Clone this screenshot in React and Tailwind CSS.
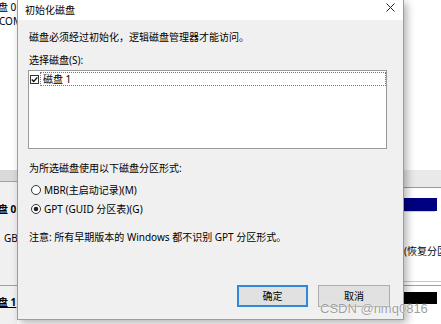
import React from 'react';

const font = { fontFamily: '"Noto Sans", "Noto Sans CJK SC", sans-serif' };

function CheckBox() {
  return (
    <svg width="9" height="9" viewBox="0 0 9 9" className="shrink-0">
      <rect x="0.5" y="0.5" width="8" height="8" fill="#fff" stroke="#333" />
      <path d="M1.8 4.6 L3.7 6.5 L7.3 2.4" fill="none" stroke="#111" strokeWidth="1.4" />
    </svg>
  );
}

function Radio({ checked }) {
  return (
    <svg width="10" height="10" viewBox="0 0 10 10" className="shrink-0">
      <circle cx="5" cy="5" r="4.5" fill="#fff" stroke="#333" />
      {checked && <circle cx="5" cy="5" r="2.3" fill="#222" />}
    </svg>
  );
}

export default function App() {
  return (
    <div
      className="relative w-[441px] h-[324px] overflow-hidden bg-white text-[10px] leading-[12px] text-black"
      style={font}
    >
      {/* Background window (Disk Management) */}
      <div className="flex h-full">
        {/* left strip */}
        <div className="w-[17px] flex flex-col overflow-hidden shrink-0">
          <div className="h-[170px] bg-white pt-[1px]">
            <div className="ml-[-12px] whitespace-nowrap">磁盘 0</div>
            <div className="ml-[-1px] mt-[2px] whitespace-nowrap">COM</div>
          </div>
          <div className="h-[11px] bg-[#dadada]" />
          <div className="h-[1px] bg-[#a0a0a0]" />
          <div className="h-[103px] bg-[#f0f0f0] pt-[21px]">
            <div className="ml-[-12px] whitespace-nowrap font-bold">磁盘 0</div>
            <div className="ml-[4px] mt-[17px] whitespace-nowrap">GB</div>
          </div>
          <div className="h-[1px] bg-[#a0a0a0]" />
          <div className="flex-1 bg-[#f0f0f0] pt-[10px]">
            <div className="ml-[-12px] whitespace-nowrap font-bold underline">磁盘 1</div>
          </div>
        </div>
        <div className="flex-1" />
        {/* right strip */}
        <div className="w-[38px] flex flex-col overflow-hidden shrink-0">
          <div className="h-[170px] bg-white" />
          <div className="h-[17px] bg-[#e9e9e9]" />
          <div className="h-[1px] bg-[#9a9a9a]" />
          <div className="h-[93px] bg-white pt-[10px] pr-[4px]">
            <div className="h-[13px] bg-[#000080]" />
            <div className="h-[1px] bg-[#d0d0d0] mr-[2px]" />
            <div className="mt-[33px] ml-[1px] whitespace-nowrap">(恢复分区</div>
          </div>
          <div className="h-[1px] bg-[#c8c8c8]" />
          <div className="h-[3px] bg-white" />
          <div className="h-[1px] bg-[#a0a0a0]" />
          <div className="flex-1 bg-white pt-[6px] pr-[4px]">
            <div className="h-[12px] bg-black" />
          </div>
        </div>
      </div>

      {/* Dialog */}
      <div className="absolute left-[17px] top-0 w-[387px] h-[320px] border border-t-0 border-[#9c9c9c] bg-[#f0f0f0] flex flex-col shadow-[3px_3px_8px_rgba(0,0,0,0.3)]">
        <div className="h-[20px] bg-white flex items-center pl-[7px] pr-[8px] shrink-0">
          <span>初始化磁盘</span>
          <svg width="9" height="9" viewBox="0 0 9 9" className="ml-auto mt-[-5px]">
            <path d="M0.5 0.5 L8.5 8.5 M8.5 0.5 L0.5 8.5" stroke="#222" strokeWidth="1" />
          </svg>
        </div>
        <div className="flex flex-col pl-[11px] flex-1">
          <div className="mt-[11px]">磁盘必须经过初始化，逻辑磁盘管理器才能访问。</div>
          <div className="mt-[11px]">选择磁盘(S):</div>
          <div className="mt-[4px] ml-[-1px] w-[359px] h-[79px] bg-white border border-[#9a9a9a] pt-[1px]">
            <div className="flex items-center h-[14px]">
              <div className="w-[10px] flex justify-end mr-[1px]">
                <CheckBox />
              </div>
              <div className="flex-1 h-[14px] ml-[0px] border border-dotted border-[#777] flex items-center pl-[2px]">
                磁盘 1
              </div>
            </div>
          </div>
          <div className="mt-[13px]">为所选磁盘使用以下磁盘分区形式:</div>
          <div className="mt-[10px] ml-[2px] flex items-center gap-[3px]">
            <Radio />
            <span>MBR(主启动记录)(M)</span>
          </div>
          <div className="mt-[7px] ml-[2px] flex items-center gap-[3px]">
            <Radio checked />
            <span>GPT (GUID 分区表)(G)</span>
          </div>
          <div className="mt-[16px]">注意: 所有早期版本的 Windows 都不识别 GPT 分区形式。</div>
          <div className="mt-[42px] flex justify-end gap-[10px] pr-[13px]">
            <button className="w-[71px] h-[22px] bg-[#e1e1e1] border-2 border-[#2f86da] flex items-center justify-center">
              确定
            </button>
            <button className="w-[72px] h-[22px] bg-[#e1e1e1] border border-[#adadad] flex items-center justify-center">
              取消
            </button>
          </div>
        </div>
      </div>

      {/* watermark */}
      <div
        className="absolute left-[320px] top-[301px] text-[13px] leading-[16px] text-[rgba(140,140,140,0.85)] whitespace-nowrap"
        style={{ fontFamily: '"Liberation Sans", Arial, sans-serif', textShadow: '0 0 1px #fff, 0 0 1px #fff' }}
      >
        CSDN @nmq0816
      </div>
    </div>
  );
}
